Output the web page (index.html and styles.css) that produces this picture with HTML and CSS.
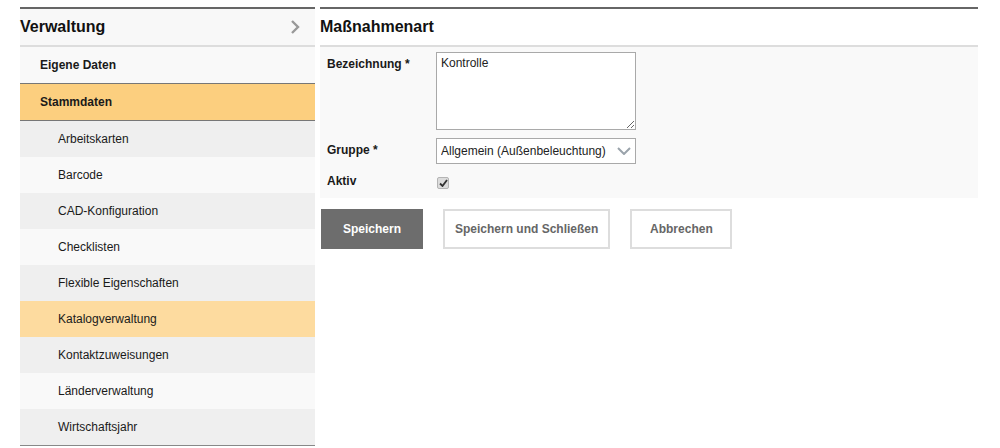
FILE: index.html
```html
<!DOCTYPE html>
<html lang="de">
    <head>
        <meta charset="utf-8">
        <title>Maßnahmenart</title>
        <link rel="stylesheet" href="styles.css">
    </head>
    <body>
        <div class='page'>

            <div class='sidebar'>
                <div class='sideHeader'>
                    <span>Verwaltung</span>
                    <svg class='headArrow' width='10' height='16' viewBox='0 0 10 16'>
                        <polyline points='2,2 8,8 2,14' fill='none' stroke='#999' stroke-width='2.4'/>
                    </svg>
                </div>
                <div class='navTop'>Eigene Daten</div>
                <div class='navTop active'>Stammdaten</div>
                <div class='navSub'>Arbeitskarten</div>
                <div class='navSub'>Barcode</div>
                <div class='navSub'>CAD-Konfiguration</div>
                <div class='navSub'>Checklisten</div>
                <div class='navSub'>Flexible Eigenschaften</div>
                <div class='navSub selected'>Katalogverwaltung</div>
                <div class='navSub'>Kontaktzuweisungen</div>
                <div class='navSub'>Länderverwaltung</div>
                <div class='navSub last'>Wirtschaftsjahr</div>
            </div>

            <div class='main'>
                <div class='mainHeader'>Maßnahmenart</div>

                <div class='formBox'>
                    <div class='formLabel'>Bezeichnung *</div>
                    <textarea class='textInput'>Kontrolle</textarea>

                    <div class='formLabel'>Gruppe *</div>
                    <div class='selectWrap'>
                        <select class='selectInput'>
                            <option>Allgemein (Außenbeleuchtung)</option>
                        </select>
                        <svg class='selectArrow' width='14' height='8' viewBox='0 0 14 8'>
                            <polyline points='1,1 7,7 13,1' fill='none' stroke='#9aa3ab' stroke-width='2'/>
                        </svg>
                    </div>

                    <div class='formLabel check'>Aktiv</div>
                    <div class='checkRow'>
                        <span class='checkBox'>
                            <svg width='9' height='8' viewBox='0 0 9 8'>
                                <polyline points='1,4.5 3.5,7 8,1' fill='none' stroke='#333' stroke-width='1.8'/>
                            </svg>
                        </span>
                    </div>
                </div>

                <div class='buttonRow'>
                    <button class='btn primary'>Speichern</button>
                    <button class='btn'>Speichern und Schließen</button>
                    <button class='btn'>Abbrechen</button>
                </div>
            </div>

        </div>
    </body>
</html>
```

FILE: styles.css
```css
body
{
    margin:           0;
    background-color: #ffffff;
    font-family:      "Liberation Sans", Arial, sans-serif;
    font-size:        12px;
    color:            #1a1a1a;
}

.page
{
    display:      flex;
    align-items:  flex-start;
    gap:          5px;
    padding-top:  7px;
    padding-left: 20px;
}

/* left navigation */

.sidebar
{
    width:      295px;
    border-top: 2px solid #666666;
}

.sideHeader
{
    height:           36px;
    display:          flex;
    align-items:      center;
    justify-content:  space-between;
    background-color: #f8f8f8;
    border-bottom:    2px solid #dddddd;
    font-size:        16px;
    font-weight:      bold;
    color:            #111111;
}

.headArrow
{
    margin-right: 15px;
}

.navTop
{
    height:           36px;
    display:          flex;
    align-items:      center;
    padding-left:     20px;
    background-color: #f9f9f9;
    border-bottom:    1px solid #777777;
    font-weight:      bold;
}

.navTop.active
{
    background-color: #fccf7f;
}

.navSub
{
    height:           36px;
    display:          flex;
    align-items:      center;
    padding-left:     38px;
    background-color: #f9f9f9;
}

.navSub:nth-child(even)
{
    background-color: #efefef;
}

.navSub.selected
{
    background-color: #fddb9f;
}

.navSub.last
{
    border-bottom: 1px solid #888888;
}

/* main content */

.main
{
    width:      658px;
    border-top: 2px solid #666666;
}

.mainHeader
{
    height:        36px;
    display:       flex;
    align-items:   center;
    border-bottom: 2px solid #dddddd;
    font-size:     16px;
    font-weight:   bold;
    color:         #111111;
}

.formBox
{
    display:               grid;
    grid-template-columns: 109px 200px;
    row-gap:               8px;
    padding:               5px 0 6px 7px;
    background-color:      #f9f9f9;
}

.formLabel
{
    font-weight: bold;
    padding-top: 5px;
}

.formLabel.check
{
    padding-top: 2px;
}

.textInput
{
    box-sizing:       border-box;
    display:          block;
    width:            200px;
    height:           78px;
    margin:           0;
    padding:          3px 4px;
    border:           1px solid #a9a9a9;
    background-color: #ffffff;
    font-family:      "Liberation Sans", Arial, sans-serif;
    font-size:        12px;
    color:            #222222;
}

.selectWrap
{
    position: relative;
    width:    200px;
    height:   26px;
}

.selectInput
{
    appearance:       none;
    box-sizing:       border-box;
    display:          block;
    width:            200px;
    height:           26px;
    margin:           0;
    padding:          0 4px;
    border:           1px solid #a9a9a9;
    border-radius:    0;
    background-color: #ffffff;
    font-family:      "Liberation Sans", Arial, sans-serif;
    font-size:        12px;
    color:            #222222;
}

.selectArrow
{
    position: absolute;
    right:    5px;
    top:      9px;
}

.checkRow
{
    height:      18px;
    display:     flex;
    align-items: center;
    padding-top: 2px;
}

.checkBox
{
    box-sizing:       border-box;
    width:            12px;
    height:           12px;
    display:          flex;
    align-items:      center;
    justify-content:  center;
    margin-left:      1px;
    border:           1px solid #b4b4b4;
    border-radius:    2px;
    background-color: #dcdcdc;
}

.buttonRow
{
    display:      flex;
    gap:          20px;
    padding-top:  11px;
    padding-left: 1px;
}

.btn
{
    box-sizing:       border-box;
    height:           40px;
    min-width:        102px;
    padding:          0 10px;
    border:           2px solid #dddddd;
    background-color: #ffffff;
    font-family:      "Liberation Sans", Arial, sans-serif;
    font-size:        12px;
    font-weight:      bold;
    color:            #666666;
}

.btn.primary
{
    width:            102px;
    border-color:     #6d6d6d;
    background-color: #6d6d6d;
    color:            #ffffff;
}
```
